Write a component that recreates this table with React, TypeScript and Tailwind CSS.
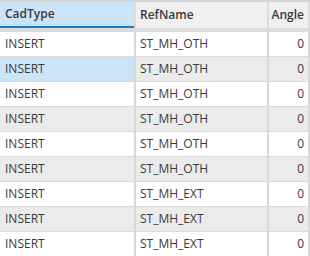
import React from "react";

const rows = [
  ["INSERT", "ST_MH_OTH", "0"],
  ["INSERT", "ST_MH_OTH", "0"],
  ["INSERT", "ST_MH_OTH", "0"],
  ["INSERT", "ST_MH_OTH", "0"],
  ["INSERT", "ST_MH_OTH", "0"],
  ["INSERT", "ST_MH_OTH", "0"],
  ["INSERT", "ST_MH_EXT", "0"],
  ["INSERT", "ST_MH_EXT", "0"],
  ["INSERT", "ST_MH_EXT", "0"],
];

export default function App() {
  return (
    <div
      className="w-[310px] h-[256px] overflow-hidden bg-white text-[12px] text-[#3a3a3a]"
      style={{ fontFamily: '"Open Sans", "Noto Sans", sans-serif' }}
    >
      <div className="h-[2px] bg-[#d4d4d4]" />
      <div className="flex h-[30px] bg-[#f0f0f0] border-b-[4px] border-[#dcdcdc]">
        <div className="w-[134px] bg-[#cce4f7] border-b-[2px] border-[#1a7bc9] flex items-center pl-[5px] font-semibold">
          CadType
        </div>
        <div className="w-[2px] bg-[#dcdcdc]" />
        <div className="w-[131px] flex items-center pl-[4px] font-semibold">RefName</div>
        <div className="w-[2px] bg-[#dcdcdc]" />
        <div className="w-[39px] flex items-center justify-end pr-[4px] font-semibold">Angle</div>
        <div className="w-[2px] bg-[#dcdcdc]" />
      </div>
      {rows.map((r, i) => {
        const gray = i % 2 === 1;
        const sel = i === 1;
        const bg = gray ? "bg-[#ebebeb]" : "bg-white";
        return (
          <div key={i} className="flex h-[25px] border-b border-[#d9d9d9]">
            <div className={`w-[134px] flex items-center pl-[5px] ${sel ? "bg-[#cce4f7]" : bg}`}>{r[0]}</div>
            <div className="w-[2px] bg-[#d9d9d9]" />
            <div className={`w-[131px] flex items-center pl-[4px] ${bg}`}>{r[1]}</div>
            <div className="w-[2px] bg-[#d9d9d9]" />
            <div className={`w-[39px] flex items-center justify-end pr-[4px] ${bg}`}>{r[2]}</div>
            <div className="w-[2px] bg-[#d9d9d9]" />
          </div>
        );
      })}
    </div>
  );
}
